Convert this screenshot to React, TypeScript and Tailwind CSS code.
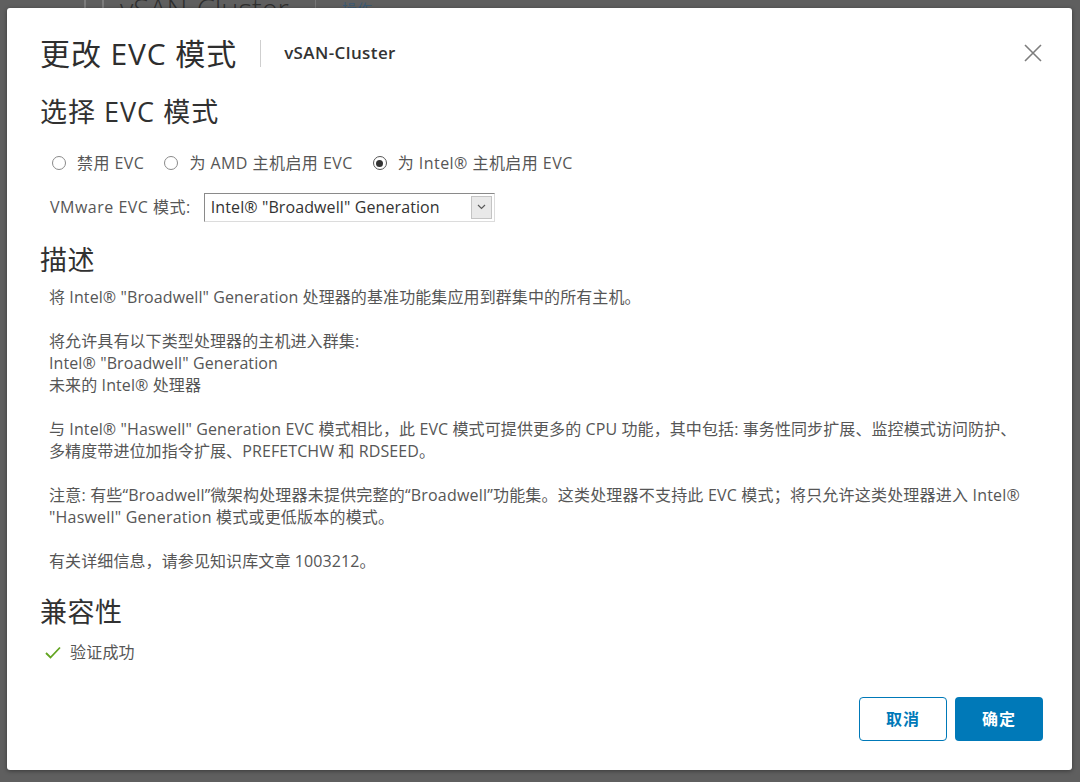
import React from 'react';

const font = "font-['Open_Sans','Noto_Sans_CJK_SC',sans-serif]";

const Radio = ({ checked, label }: { checked?: boolean; label: string }) => (
  <label className="flex items-center gap-[11px]">
    <span
      className={`flex h-[14px] w-[14px] items-center justify-center rounded-full border ${
        checked ? 'border-[#555]' : 'border-[#8a8a8a]'
      } bg-white`}
    >
      {checked && <span className="h-[7px] w-[7px] rounded-full bg-[#333]" />}
    </span>
    <span>{label}</span>
  </label>
);

const App: React.FC = () => {
  return (
    <div className={`relative h-[782px] w-[1080px] overflow-hidden bg-[#5f5f5f] ${font}`}>
      {/* page behind the overlay */}
      <div className="-mt-[11px] flex h-[40px] items-center pl-[84px]">
        <div className="h-[22px] w-[20px] rounded-[2px] border-2 border-[#7c7c7c]" />
        <span className="ml-[16px] text-[29px] font-light text-[#2f2f2f]">vSAN-Cluster</span>
        <div className="ml-[26px] h-[40px] w-px bg-[#777]" />
        <span className="ml-[26px] text-[15px] text-[#3d5a73]">操作</span>
      </div>

      {/* modal */}
      <div className="absolute left-[7px] top-[8px] flex h-[762px] w-[1065px] flex-col rounded-[3px] bg-white pb-[29px] pl-[33px] pr-[29px] pt-[23px] shadow-[0_1px_4px_rgba(0,0,0,0.4)]">
        <div className="flex h-[44px] items-center">
          <h1 className="text-[30px] font-normal tracking-[0.9px] text-[#2e2e2e]">更改 EVC 模式</h1>
          <div className="ml-[23px] h-[27px] w-px bg-[#cfcfcf]" />
          <span className="ml-[23px] text-[17px] font-semibold tracking-[0.4px] text-[#333]">vSAN-Cluster</span>
          <button className="ml-auto flex h-[20px] w-[20px] items-center justify-center">
            <svg width="18" height="18" viewBox="0 0 18 18" fill="none" stroke="#7d7d7d" strokeWidth="1.6">
              <path d="M1 1 L17 17 M17 1 L1 17" />
            </svg>
          </button>
        </div>

        <h2 className="mt-[19px] text-[27px] leading-[36px] tracking-[1px] text-[#313131]">选择 EVC 模式</h2>

        <div className="ml-[12px] mt-[22px] flex h-[22px] items-center gap-[20px] text-[16px] tracking-[0.45px] text-[#565656]">
          <Radio label="禁用 EVC" />
          <Radio label="为 AMD 主机启用 EVC" />
          <Radio checked label="为 Intel® 主机启用 EVC" />
        </div>

        <div className="ml-[10px] mt-[18px] flex h-[30px] items-center text-[16px] text-[#565656]">
          <span className="tracking-[0.5px]">VMware EVC 模式:</span>
          <div className="ml-[13px] flex h-[29px] w-[291px] items-center border border-b-[#dcdcdc] border-l-[#8a8a8a] border-r-[#dcdcdc] border-t-[#8a8a8a] bg-white pl-[6px] pr-[2px] tracking-[0.1px] text-[#333]">
            <span className="flex-1">Intel® "Broadwell" Generation</span>
            <span className="flex h-[23px] w-[21px] items-center justify-center border border-[#c4c4c4] bg-[#e9e9e9]">
              <svg width="9" height="6" viewBox="0 0 9 6" fill="none" stroke="#5a5a5a" strokeWidth="1.2">
                <path d="M1 1 L4.5 4.5 L8 1" />
              </svg>
            </span>
          </div>
        </div>

        <h2 className="mt-[20px] text-[27px] leading-[36px] tracking-[0.5px] text-[#313131]">描述</h2>

        <div className="ml-[9px] mt-[8px] whitespace-nowrap text-[16px] leading-[22px] tracking-[0.1px] text-[#565656]">
          <p>将 Intel® "Broadwell" Generation 处理器的基准功能集应用到群集中的所有主机。</p>
          <p className="mt-[22px]">
            将允许具有以下类型处理器的主机进入群集:
            <br />
            Intel® "Broadwell" Generation
            <br />
            未来的 Intel® 处理器
          </p>
          <p className="mt-[22px]">
            与 Intel® "Haswell" Generation EVC 模式相比，此 EVC 模式可提供更多的 CPU 功能，其中包括: 事务性同步扩展、监控模式访问防护、
            <br />
            多精度带进位加指令扩展、PREFETCHW 和 RDSEED。
          </p>
          <p className="mt-[22px] tracking-[0.2px]">
            注意: 有些“Broadwell”微架构处理器未提供完整的“Broadwell”功能集。这类处理器不支持此 EVC 模式；将只允许这类处理器进入 Intel®
            <br />
            "Haswell" Generation 模式或更低版本的模式。
          </p>
          <p className="mt-[22px]">有关详细信息，请参见知识库文章 1003212。</p>
        </div>

        <h2 className="mt-[22px] text-[27px] leading-[36px] tracking-[0.5px] text-[#313131]">兼容性</h2>

        <div className="ml-[5px] mt-[11px] flex h-[22px] items-center gap-[9px] text-[16px] tracking-[0.2px] text-[#565656]">
          <svg width="16" height="13" viewBox="0 0 16 13" fill="none" stroke="#62a420" strokeWidth="1.8">
            <path d="M1 7 L5.5 11.5 L15 1.5" />
          </svg>
          <span>验证成功</span>
        </div>

        <div className="mt-auto flex justify-end gap-[8px]">
          <button className="h-[44px] w-[88px] rounded-[4px] border border-[#0079b8] bg-white text-[16px] font-semibold tracking-[1px] text-[#0079b8]">
            取消
          </button>
          <button className="h-[44px] w-[88px] rounded-[4px] bg-[#0079b8] text-[16px] font-semibold tracking-[1px] text-white">
            确定
          </button>
        </div>
      </div>
    </div>
  );
};

export default App;
